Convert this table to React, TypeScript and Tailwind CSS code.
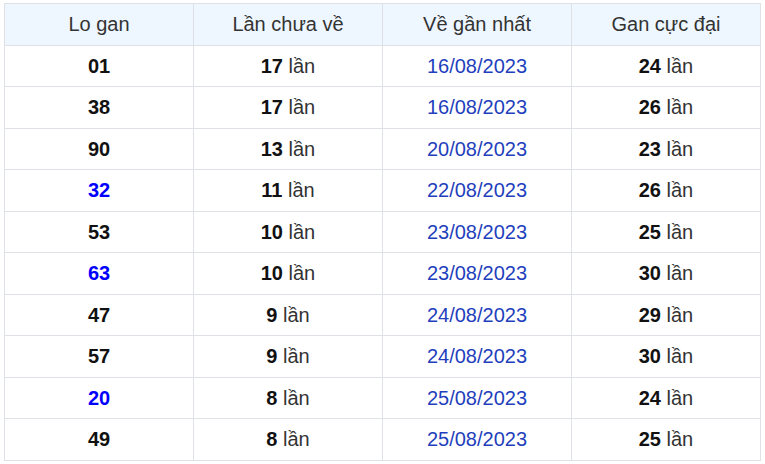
import React from 'react';

type Row = {
  num: string;
  blue?: boolean;
  misses: number;
  last: string;
  max: number;
};

const rows: Row[] = [
  { num: '01', misses: 17, last: '16/08/2023', max: 24 },
  { num: '38', misses: 17, last: '16/08/2023', max: 26 },
  { num: '90', misses: 13, last: '20/08/2023', max: 23 },
  { num: '32', blue: true, misses: 11, last: '22/08/2023', max: 26 },
  { num: '53', misses: 10, last: '23/08/2023', max: 25 },
  { num: '63', blue: true, misses: 10, last: '23/08/2023', max: 30 },
  { num: '47', misses: 9, last: '24/08/2023', max: 29 },
  { num: '57', misses: 9, last: '24/08/2023', max: 30 },
  { num: '20', blue: true, misses: 8, last: '25/08/2023', max: 24 },
  { num: '49', misses: 8, last: '25/08/2023', max: 25 },
];

const headers = ['Lo gan', 'Lần chưa về', 'Về gần nhất', 'Gan cực đại'];

export default function App() {
  return (
    <div className="w-[765px] h-[464px] bg-white pt-[3px] pl-[4px] font-['Liberation_Sans',Arial,sans-serif] text-[20px]">
      <table className="w-[757px] border-collapse table-fixed">
        <thead>
          <tr className="bg-[#eef6ff]">
            {headers.map((h) => (
              <th
                key={h}
                className="h-[41.5px] border border-[#dee2e6] font-normal text-[#333333] text-center p-0"
              >
                {h}
              </th>
            ))}
          </tr>
        </thead>
        <tbody>
          {rows.map((r) => (
            <tr key={r.num}>
              <td
                className={`h-[41.5px] border border-[#dee2e6] text-center font-bold p-0 ${
                  r.blue ? 'text-[#0000ff]' : 'text-[#111111]'
                }`}
              >
                {r.num}
              </td>
              <td className="h-[41.5px] border border-[#dee2e6] text-center p-0 text-[#333333]">
                <b className="text-[#111111]">{r.misses}</b> lần
              </td>
              <td className="h-[41.5px] border border-[#dee2e6] text-center p-0 text-[#1f3fbd]">
                {r.last}
              </td>
              <td className="h-[41.5px] border border-[#dee2e6] text-center p-0 text-[#333333]">
                <b className="text-[#111111]">{r.max}</b> lần
              </td>
            </tr>
          ))}
        </tbody>
      </table>
    </div>
  );
}
